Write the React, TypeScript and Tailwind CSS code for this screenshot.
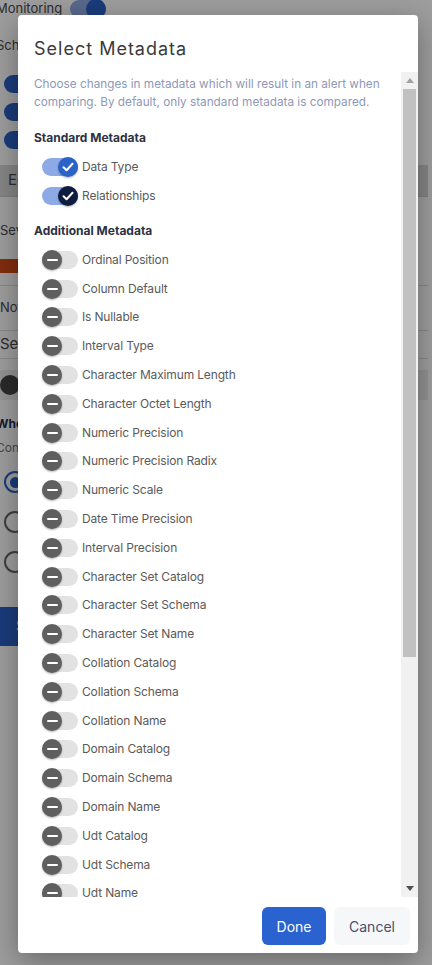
import React from 'react'

const additional = [
  'Ordinal Position',
  'Column Default',
  'Is Nullable',
  'Interval Type',
  'Character Maximum Length',
  'Character Octet Length',
  'Numeric Precision',
  'Numeric Precision Radix',
  'Numeric Scale',
  'Date Time Precision',
  'Interval Precision',
  'Character Set Catalog',
  'Character Set Schema',
  'Character Set Name',
  'Collation Catalog',
  'Collation Schema',
  'Collation Name',
  'Domain Catalog',
  'Domain Schema',
  'Domain Name',
  'Udt Catalog',
  'Udt Schema',
  'Udt Name',
  'Scope Catalog',
  'Scope Schema',
  'Scope Name',
  'Maximum Cardinality',
  'Dtd Identifier',
  'Is Self Referencing',
  'Is Identity',
  'Identity Generation',
  'Identity Start',
  'Identity Increment',
  'Identity Maximum',
]

function Toggle({ on, dark }: { on?: boolean; dark?: boolean }) {
  return (
    <div className="relative w-9 h-5 flex items-center shrink-0">
      <div className={`w-9 h-[18px] rounded-full ${on ? 'bg-[#8eaae6]' : 'bg-[#e2e2e2]'}`} />
      <div
        className={`absolute top-0 w-5 h-5 rounded-full flex items-center justify-center shadow-[0_1px_2px_rgba(0,0,0,0.3)] ${
          on ? (dark ? 'right-0 bg-[#0e1c3f]' : 'right-0 bg-[#2b62c8]') : 'left-0 bg-[#5f5f5f]'
        }`}
      >
        {on ? (
          <svg width="14" height="14" viewBox="0 0 14 14" fill="none">
            <path d="M2.5 7.2 L5.6 10.2 L11.5 3.8" stroke="white" strokeWidth="2" strokeLinecap="round" strokeLinejoin="round" />
          </svg>
        ) : (
          <div className="w-[11px] h-[2px] bg-white rounded-sm" />
        )}
      </div>
    </div>
  )
}

function Row({ label, on, dark }: { label: string; on?: boolean; dark?: boolean }) {
  return (
    <div className="h-[28.8px] flex items-center gap-1 pl-2">
      <Toggle on={on} dark={dark} />
      <span className="text-[12px] tracking-[-0.15px] text-[#5a5a5a] whitespace-nowrap">{label}</span>
    </div>
  )
}

function Scrollbar() {
  return (
    <div className="w-[17px] shrink-0 bg-[#f1f1f1] flex flex-col">
      <div className="h-[17px] flex items-center justify-center">
        <svg width="8" height="5" viewBox="0 0 8 5">
          <path d="M0 5 L4 0 L8 5 Z" fill="#a3a3a3" />
        </svg>
      </div>
      <div className="h-[568px] mx-[2px] bg-[#c1c1c1]" />
      <div className="flex-1" />
      <div className="h-[17px] flex items-center justify-center">
        <svg width="8" height="5" viewBox="0 0 8 5">
          <path d="M0 0 L8 0 L4 5 Z" fill="#505050" />
        </svg>
      </div>
    </div>
  )
}

function Background() {
  return (
    <div className="w-[432px] h-[965px] bg-white overflow-hidden text-[#4a4a4a] text-[13px] -ml-1">
      <div className="flex items-center gap-2 h-[18px]">
        <span>Monitoring</span>
        <div className="relative w-9 h-5 flex items-center">
          <div className="w-9 h-[18px] rounded-full bg-[#8eaae6]" />
          <div className="absolute right-0 top-0 w-5 h-5 rounded-full bg-[#2b62c8]" />
        </div>
      </div>
      <div className="mt-[18px] h-[18px]">Schedule</div>
      <div className="mt-[21px] flex flex-col gap-[10px] pl-2">
        <div className="w-9 h-[18px] rounded-full bg-[#2b62c8]" />
        <div className="w-9 h-[18px] rounded-full bg-[#2b62c8]" />
        <div className="w-9 h-[18px] rounded-full bg-[#2b62c8]" />
      </div>
      <div className="mt-[16px] h-[32px] bg-[#d9d9d9] flex items-center pl-3 text-[15px] border-b border-[#ccc]">Edit</div>
      <div className="border-b border-[#ddd] pl-1 pb-[12px]">
        <div className="mt-[25px] h-[18px] flex items-center">Severity</div>
        <div className="mt-[19px] w-[60px] h-[14px] bg-[#d24a16]" />
      </div>
      <div className="h-[45px] flex items-center pl-1 border-b border-[#ddd]">Notification</div>
      <div className="h-[28px] flex items-center pl-1 text-[15px] border-b border-[#ddd]">Select</div>
      <div className="mt-[11px] h-[30px] bg-[#eee] flex items-center pl-1">
        <div className="w-5 h-5 rounded-full bg-[#444]" />
      </div>
      <div className="mt-[15px] h-4 font-bold text-[#1d2b55] text-[12px]">When</div>
      <div className="mt-[8px] h-4 text-[#777] text-[12px]">Contains</div>
      <div className="mt-[16px] flex flex-col gap-[18px] pl-[8px]">
        <div className="w-[22px] h-[22px] rounded-full border-2 border-[#2b62c8] flex items-center justify-center">
          <div className="w-[11px] h-[11px] rounded-full bg-[#2b62c8]" />
        </div>
        <div className="w-[22px] h-[22px] rounded-full border-2 border-[#666]" />
        <div className="w-[22px] h-[22px] rounded-full border-2 border-[#666]" />
      </div>
      <div className="mt-[34px] h-[39px] w-[120px] bg-[#2b62c8] text-white flex items-center pl-5 text-[15px]">Save</div>
    </div>
  )
}

export default function App() {
  return (
    <div className="relative w-[432px] h-[965px] overflow-hidden font-['Inter',sans-serif]">
      <Background />
      <div className="absolute inset-0 bg-black/[0.38] pt-[15px] pl-[18px]">
        <div className="w-[400px] h-[938px] bg-white rounded-[4px] shadow-[0_8px_30px_rgba(0,0,0,0.35)] flex flex-col">
          <div className="pl-4 pt-[22px] h-[57px] text-[18px] leading-6 tracking-[1px] text-[#3a3a3a]">Select Metadata</div>
          <div className="flex-1 min-h-0 flex">
            <div className="flex-1 overflow-hidden pl-4">
              <p className="pt-[3px] pr-4 text-[11.75px] leading-[18px] text-[#8e98b8]">
                Choose changes in metadata which will result in an alert when comparing. By default, only standard
                metadata is compared.
              </p>
              <div className="mt-[19px] text-[12px] leading-4 font-bold text-[#2d3142]">Standard Metadata</div>
              <div className="mt-[6.6px]">
                <Row label="Data Type" on />
                <Row label="Relationships" on dark />
              </div>
              <div className="mt-[12.6px] text-[12px] leading-4 font-bold text-[#2d3142]">Additional Metadata</div>
              <div className="mt-[6.6px]">
                {additional.map((a) => (
                  <Row key={a} label={a} />
                ))}
              </div>
            </div>
            <Scrollbar />
          </div>
          <div className="flex justify-end gap-2 pt-[10px] pb-2 pr-2">
            <button className="w-16 h-[38px] rounded-[6px] bg-[#2a63cf] text-white text-[14px]">Done</button>
            <button className="w-[76px] h-[38px] rounded-[6px] bg-[#f6f7f9] text-[#4a5068] text-[14px]">Cancel</button>
          </div>
        </div>
      </div>
    </div>
  )
}
